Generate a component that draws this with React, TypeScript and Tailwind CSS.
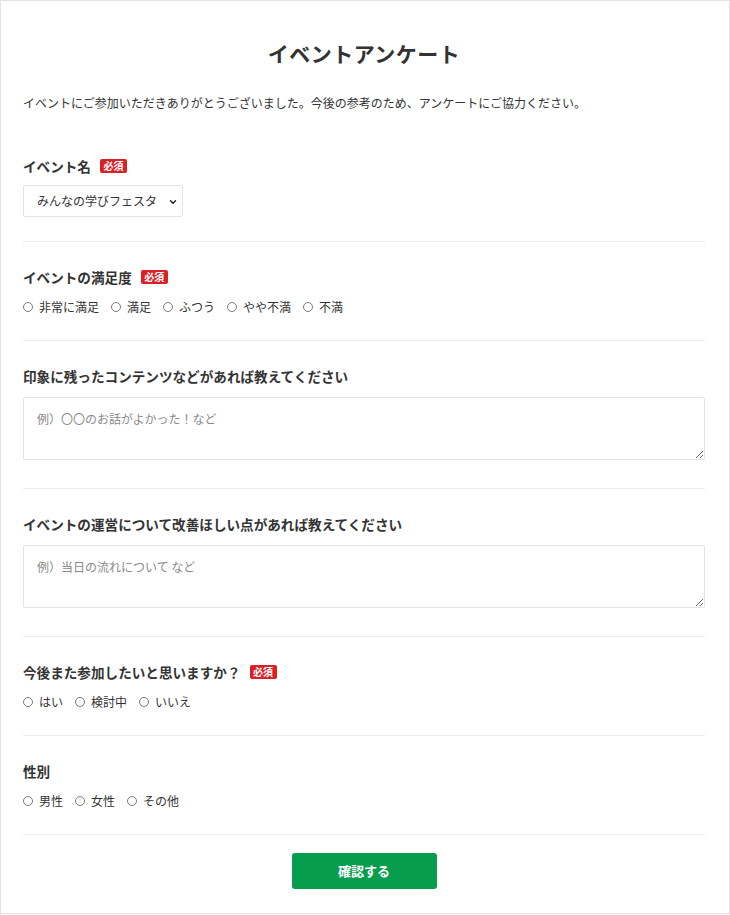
import { ChevronDown } from 'lucide-react';

const font = '"Noto Sans CJK JP", "Noto Sans", sans-serif';

function Badge() {
  return (
    <span className="ml-[9px] inline-flex h-[14px] w-[27px] items-center justify-center rounded-[2px] bg-[#dc1e25] text-[10px] font-bold leading-none text-white">
      必須
    </span>
  );
}

function Label({ text, required }: { text: string; required?: boolean }) {
  return (
    <div className="flex h-[20px] items-center text-[13.6px] font-bold leading-[20px] text-[#333]">
      {text}
      {required && <Badge />}
    </div>
  );
}

function Radios({ name, options }: { name: string; options: string[] }) {
  return (
    <div className="mt-[10px] flex h-[20px] items-center gap-[12px] text-[12px] leading-[20px] text-[#333]">
      {options.map((opt) => (
        <label key={opt} htmlFor={`${name}-${opt}`} className="flex items-center">
          <span className="mr-[6px] inline-block h-[10px] w-[10px] rounded-full border border-[#7a7a7a] bg-white" />
          {opt}
        </label>
      ))}
    </div>
  );
}

function TextArea({ placeholder }: { placeholder: string }) {
  return (
    <textarea
      placeholder={placeholder}
      className="mt-[11px] mb-[28px] block h-[63px] w-full resize-y rounded-[2px] border border-[#e3e3e3] px-[13px] py-[12px] text-[12px] leading-[18px] text-[#333] placeholder:text-[#8a8a8a] focus:outline-none"
      style={{ fontFamily: font }}
    />
  );
}

export default function App() {
  return (
    <div
      className="box-border w-[730px] border border-[#e2e2e2] bg-white pl-[22px] pr-[24px] pt-[37px] pb-[24px] text-[#333]"
      style={{ fontFamily: font }}
    >
      <h1 className="text-center text-[21px] font-bold leading-[30px] tracking-[0.5px] text-[#333]">
        イベントアンケート
      </h1>
      <p className="mt-[25px] text-[12px] leading-[20px] text-[#333]">
        イベントにご参加いただきありがとうございました。今後の参考のため、アンケートにご協力ください。
      </p>

      <section className="mt-[43px] border-b border-[#ececec] pb-[24px]">
        <Label text="イベント名" required />
        <div className="relative mt-[9px] h-[32px] w-[160px] rounded-[2px] border border-[#e3e3e3] bg-white">
          <div className="flex h-full items-center pl-[13px] text-[12px] text-[#333]">
            みんなの学びフェスタ
          </div>
          <ChevronDown
            className="absolute right-[4px] top-[11px] h-[10px] w-[10px] text-[#222]"
            strokeWidth={3.5}
          />
        </div>
      </section>

      <section className="border-b border-[#ececec] pt-[25px] pb-[23px]">
        <Label text="イベントの満足度" required />
        <Radios name="satisfaction" options={['非常に満足', '満足', 'ふつう', 'やや不満', '不満']} />
      </section>

      <section className="border-b border-[#ececec] pt-[25px]">
        <Label text="印象に残ったコンテンツなどがあれば教えてください" />
        <TextArea placeholder="例）〇〇のお話がよかった！など" />
      </section>

      <section className="border-b border-[#ececec] pt-[25px]">
        <Label text="イベントの運営について改善ほしい点があれば教えてください" />
        <TextArea placeholder="例）当日の流れについて など" />
      </section>

      <section className="border-b border-[#ececec] pt-[25px] pb-[23px]">
        <Label text="今後また参加したいと思いますか？" required />
        <Radios name="again" options={['はい', '検討中', 'いいえ']} />
      </section>

      <section className="border-b border-[#ececec] pt-[25px] pb-[23px]">
        <Label text="性別" />
        <Radios name="gender" options={['男性', '女性', 'その他']} />
      </section>

      <div className="mt-[18px] flex justify-center">
        <button
          type="button"
          className="h-[36px] w-[145px] rounded-[3px] bg-[#079d4f] text-[13px] font-bold text-white"
          style={{ fontFamily: font }}
        >
          確認する
        </button>
      </div>
    </div>
  );
}
